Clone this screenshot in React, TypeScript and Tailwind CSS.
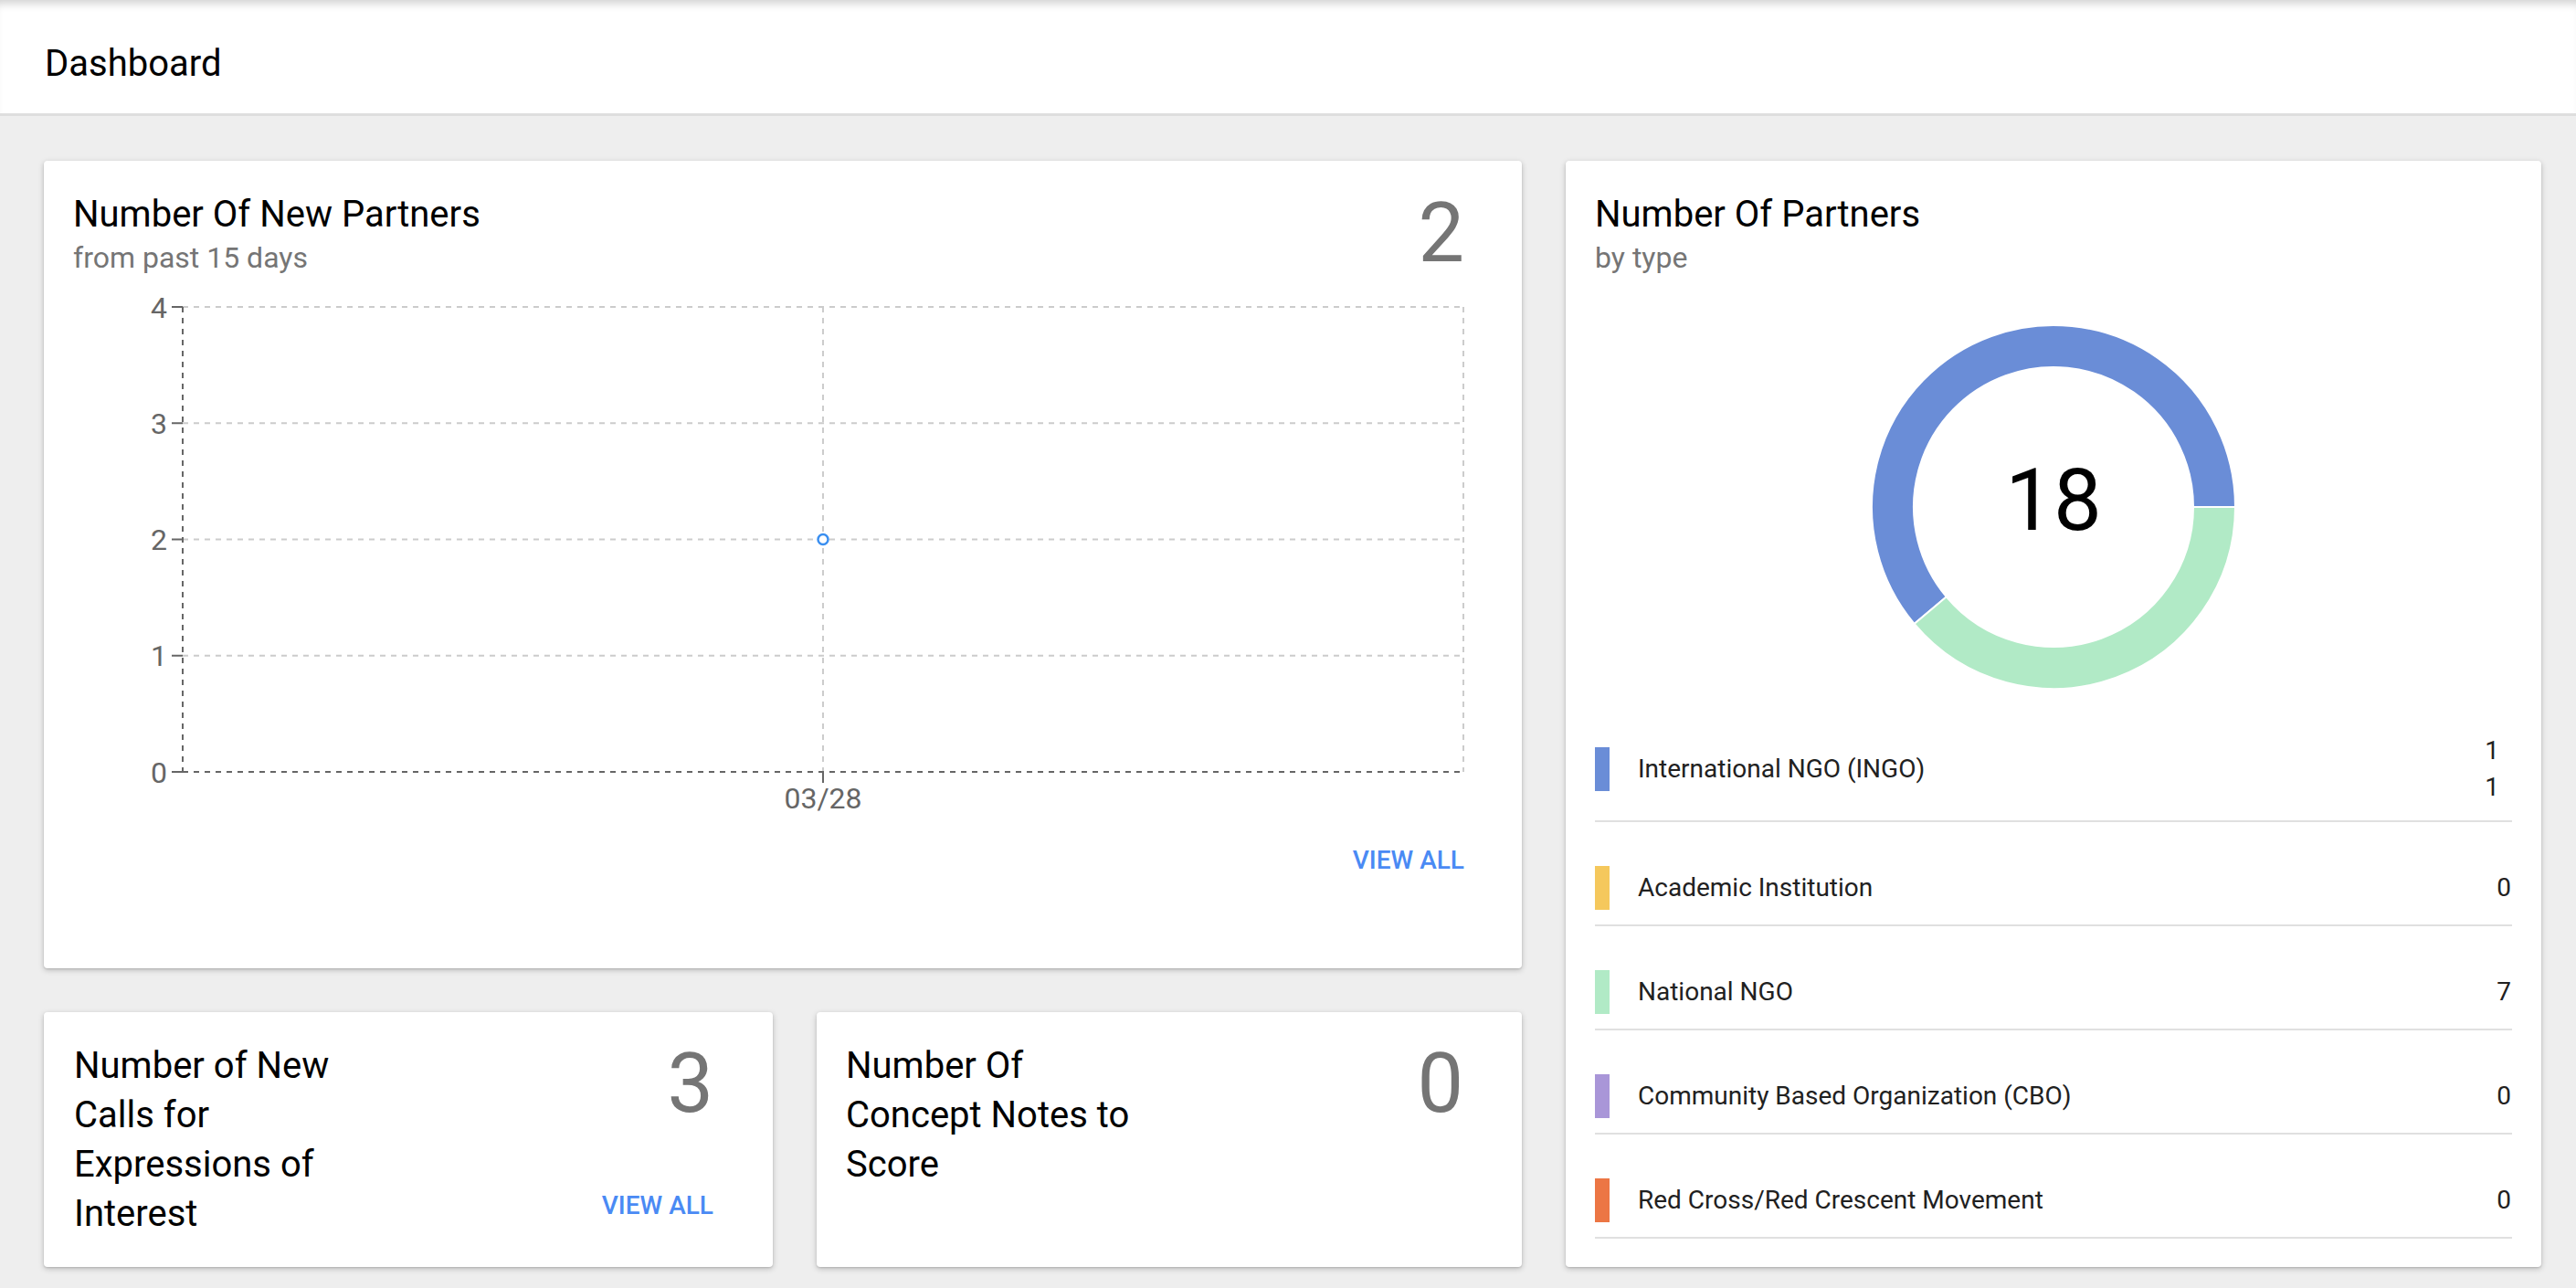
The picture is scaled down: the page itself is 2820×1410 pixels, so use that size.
import * as React from 'react';

const legend = [
  { label: 'International NGO (INGO)', value: ['1', '1'], color: 'bg-[#6a8dd7]' },
  { label: 'Academic Institution', value: ['0'], color: 'bg-[#f5c85c]' },
  { label: 'National NGO', value: ['7'], color: 'bg-[#b1eac6]' },
  { label: 'Community Based Organization (CBO)', value: ['0'], color: 'bg-[#a996d8]' },
  { label: 'Red Cross/Red Crescent Movement', value: ['0'], color: 'bg-[#ec7644]' },
];

const card = 'bg-white rounded-[4px] shadow-[0_2px_6px_rgba(0,0,0,0.22),0_1px_2px_rgba(0,0,0,0.12)]';

const CardTitle = ({ title, subtitle }: { title: string; subtitle: string }) => (
  <div className="flex flex-col">
    <div className="text-[40px] leading-[48px] text-black">{title}</div>
    <div className="mt-[3px] text-[32px] leading-[40px] text-[#757575]">{subtitle}</div>
  </div>
);

const ViewAll = ({ className = '' }: { className?: string }) => (
  <div className={`text-[28px] leading-[36px] font-medium text-[#4a8af4] ${className}`}>VIEW ALL</div>
);

const LineChart = () => {
  const ys = [17, 144.25, 271.5, 398.75, 526];
  const labels = ['4', '3', '2', '1', '0'];
  return (
    <svg width="1523" height="580" className="block" style={{ fontFamily: 'Roboto, sans-serif' }}>
      {ys.slice(0, 4).map((y) => (
        <line key={y} x1="120" y1={y} x2="1522" y2={y} stroke="#cccccc" strokeWidth="2" strokeDasharray="6 6" />
      ))}
      <line x1="821" y1="17" x2="821" y2="526" stroke="#cccccc" strokeWidth="2" strokeDasharray="6 6" />
      <line x1="1522" y1="17" x2="1522" y2="526" stroke="#cccccc" strokeWidth="2" strokeDasharray="6 6" />
      <line x1="120" y1="17" x2="120" y2="526" stroke="#666666" strokeWidth="2" strokeDasharray="6 6" />
      <line x1="120" y1="526" x2="1522" y2="526" stroke="#666666" strokeWidth="2" strokeDasharray="6 6" />
      {ys.map((y, i) => (
        <g key={i}>
          <line x1="108" y1={y} x2="120" y2={y} stroke="#666666" strokeWidth="2" />
          <text x="103" y={y} dy="0.36em" textAnchor="end" fontSize="32" fill="#666666">
            {labels[i]}
          </text>
        </g>
      ))}
      <line x1="821" y1="526" x2="821" y2="538" stroke="#666666" strokeWidth="2" />
      <text x="821" y="566" textAnchor="middle" fontSize="32" fill="#666666">03/28</text>
      <circle cx="821" cy="271.5" r="5.5" fill="#ffffff" stroke="#3b8ff0" strokeWidth="2.5" />
    </svg>
  );
};

const Donut = () => (
  <svg width="400" height="400" viewBox="0 0 400 400" className="block">
    <path
      d="M47.6 327.9 A199 199 0 1 1 399 200 L353 200 A153 153 0 1 0 82.8 298.3 Z"
      fill="#6a8dd7"
      stroke="#ffffff"
      strokeWidth="2"
    />
    <path
      d="M399 200 A199 199 0 0 1 47.6 327.9 L82.8 298.3 A153 153 0 0 0 353 200 Z"
      fill="#b1eac6"
      stroke="#ffffff"
      strokeWidth="2"
    />
    <text x="200" y="225" textAnchor="middle" fontSize="94" fill="#000000" style={{ fontFamily: 'Roboto, sans-serif' }}>
      18
    </text>
  </svg>
);

export default function App() {
  return (
    <div className="w-[2820px] h-[1410px] overflow-hidden bg-[#eeeeee] font-['Roboto','Liberation_Sans',sans-serif]">
      <div className="h-[127px] bg-white border-b-[3px] border-[#dedede] shadow-[inset_0_10px_10px_-6px_rgba(0,0,0,0.18)] pl-[49px] pt-[50px]">
        <div className="text-[40px] leading-[40px] text-black">Dashboard</div>
      </div>

      <div className="flex gap-[48px] pl-[48px] pt-[49px]">
        <div className="flex flex-col gap-[48px] w-[1618px]">
          <div className={`${card} h-[884px] pl-[32px] pr-[63px] pt-[35px] flex flex-col`}>
            <div className="flex justify-between items-start">
              <CardTitle title="Number Of New Partners" subtitle="from past 15 days" />
              <div className="text-[90px] leading-[90px] text-[#757575]">2</div>
            </div>
            <div className="mt-[17px]">
              <LineChart />
            </div>
            <ViewAll className="self-end mt-[25px]" />
          </div>

          <div className="flex gap-[48px]">
            <div className={`${card} w-[798px] h-[279px] pl-[33px] pr-[65px] pt-[32px] flex justify-between items-start`}>
              <div className="w-[320px] text-[40px] leading-[54px] text-black">
                Number of New Calls for Expressions of Interest
              </div>
              <div className="flex flex-col items-end pt-[2px]">
                <div className="text-[90px] leading-[90px] text-[#757575]">3</div>
                <ViewAll className="mt-[70px]" />
              </div>
            </div>
            <div className={`${card} w-[772px] h-[279px] pl-[32px] pr-[64px] pt-[32px] flex justify-between items-start`}>
              <div className="w-[320px] text-[40px] leading-[54px] text-black">
                Number Of Concept Notes to Score
              </div>
              <div className="pt-[2px] text-[90px] leading-[90px] text-[#757575]">0</div>
            </div>
          </div>
        </div>

        <div className={`${card} w-[1068px] h-[1211px] pl-[32px] pr-[32px] pt-[35px] flex flex-col`}>
          <CardTitle title="Number Of Partners" subtitle="by type" />
          <div className="flex justify-center mt-[53px]">
            <Donut />
          </div>
          <div className="flex flex-col">
            {legend.map((item, idx) => (
              <div
                key={item.label}
                className={`flex items-center ${idx === 0 ? 'pt-[47px]' : 'pt-[48px]'} pb-[16px] border-b-[2px] border-[#e0e0e0]`}
              >
                <div className={`w-[16px] h-[48px] ${item.color}`} />
                <div className="ml-[31px] flex-1 text-[28px] leading-[40px] text-[#212121]">{item.label}</div>
                <div className={`text-right text-[28px] leading-[40px] text-[#212121] ${item.value.length > 1 ? 'pr-[14px]' : 'pr-[1px]'}`}>
                  {item.value.map((v, i) => (
                    <div key={i}>{v}</div>
                  ))}
                </div>
              </div>
            ))}
          </div>
        </div>
      </div>
    </div>
  );
}
